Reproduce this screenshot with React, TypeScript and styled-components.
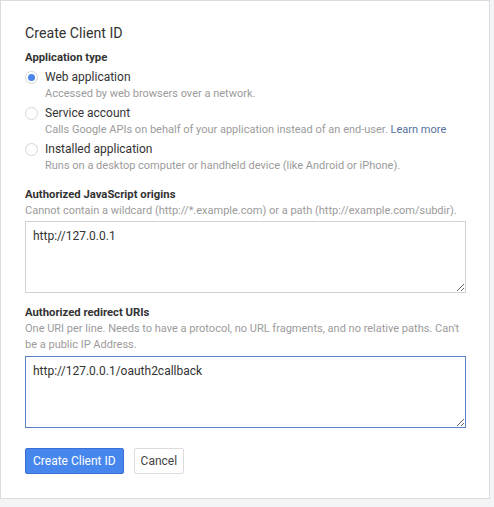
import React from "react";
import styled, { createGlobalStyle } from "styled-components";

const Global = createGlobalStyle`
  html, body { margin: 0; padding: 0; }
  body {
    background: #f3f4f5;
    font-family: Roboto, "Noto Sans", Arial, sans-serif;
    width: 494px;
    height: 507px;
    overflow: hidden;
  }
`;

const Dialog = styled.div`
  box-sizing: border-box;
  width: 490px;
  height: 499px;
  background: #fff;
  border: 1px solid #dcdcdc;
  padding: 22px 24px 0 24px;
  display: flex;
  flex-direction: column;
`;

const Title = styled.h1`
  margin: 0;
  font-size: 14.2px;
  line-height: 20px;
  font-weight: 400;
  color: #333;
`;

const Heading = styled.div<{ $top: number }>`
  margin-top: ${(p) => p.$top}px;
  font-size: 11.3px;
  line-height: 16px;
  font-weight: 700;
  color: #333;
`;

const Hint = styled.div<{ $lh?: number }>`
  font-size: 11px;
  line-height: ${(p) => p.$lh ?? 15}px;
  color: #9b9b9b;
`;

const Options = styled.div`
  margin-top: 3px;
  display: flex;
  flex-direction: column;
  gap: 4px;
`;

const Option = styled.label`
  display: grid;
  grid-template-columns: 12px 1fr;
  column-gap: 8px;
  cursor: pointer;
`;

const Radio = styled.span<{ $on?: boolean }>`
  box-sizing: border-box;
  width: 13px;
  height: 13px;
  margin-top: 2px;
  border-radius: 50%;
  border: 1px solid #d6d6d6;
  background: #fff;
  display: flex;
  align-items: center;
  justify-content: center;
  &::after {
    content: "";
    width: 7px;
    height: 7px;
    border-radius: 50%;
    background: ${(p) => (p.$on ? "#4d84e8" : "transparent")};
  }
`;

const OptionLabel = styled.div`
  font-size: 12px;
  line-height: 17px;
  color: #333;
`;

const OptionHint = styled(Hint)`
  grid-column: 2;
`;

const Link = styled.a`
  color: #56739e;
  text-decoration: none;
`;

const Area = styled.textarea<{ $focus?: boolean }>`
  box-sizing: border-box;
  display: block;
  width: 441px;
  height: 72px;
  margin-top: 3px;
  padding: 6px 7px;
  border: 1px solid ${(p) => (p.$focus ? "#5a80c4" : "#d2d2d2")};
  border-radius: 0;
  outline: none;
  font-family: Roboto, "Noto Sans", Arial, sans-serif;
  font-size: 12px;
  line-height: 16px;
  color: #333;
  resize: both;
`;

const Actions = styled.div`
  margin-top: 20px;
  display: flex;
  gap: 10px;
`;

const Button = styled.button<{ $primary?: boolean }>`
  box-sizing: border-box;
  height: 26px;
  padding: 0 ${(p) => (p.$primary ? 7 : 6)}px;
  border: 1px solid ${(p) => (p.$primary ? "#3a70d6" : "#dcdcdc")};
  border-radius: 2px;
  background: ${(p) => (p.$primary ? "#4787ed" : "#fff")};
  color: ${(p) => (p.$primary ? "#fff" : "#444")};
  font-family: Roboto, "Noto Sans", Arial, sans-serif;
  font-size: 12px;
  cursor: pointer;
`;

const options = [
  {
    label: "Web application",
    hint: "Accessed by web browsers over a network.",
    on: true,
  },
  {
    label: "Service account",
    hint: "Calls Google APIs on behalf of your application instead of an end-user.",
    link: "Learn more",
  },
  {
    label: "Installed application",
    hint: "Runs on a desktop computer or handheld device (like Android or iPhone).",
  },
];

export default function App() {
  return (
    <>
      <Global />
      <Dialog>
        <Title>Create Client ID</Title>
        <Heading $top={7}>Application type</Heading>
        <Options>
          {options.map((o) => (
            <Option key={o.label}>
              <Radio $on={o.on} />
              <OptionLabel>{o.label}</OptionLabel>
              <OptionHint>
                {o.hint}
                {o.link && (
                  <>
                    {" "}
                    <Link href="#">{o.link}</Link>
                  </>
                )}
              </OptionHint>
            </Option>
          ))}
        </Options>
        <Heading $top={14}>Authorized JavaScript origins</Heading>
        <Hint>
          Cannot contain a wildcard (http://*.example.com) or a path
          (http://example.com/subdir).
        </Hint>
        <Area defaultValue="http://127.0.0.1" />
        <Heading $top={12}>Authorized redirect URIs</Heading>
        <Hint $lh={16}>
          One URI per line. Needs to have a protocol, no URL fragments, and no
          relative paths. Can't be a public IP Address.
        </Hint>
        <Area $focus defaultValue="http://127.0.0.1/oauth2callback" />
        <Actions>
          <Button $primary>Create Client ID</Button>
          <Button>Cancel</Button>
        </Actions>
      </Dialog>
    </>
  );
}
